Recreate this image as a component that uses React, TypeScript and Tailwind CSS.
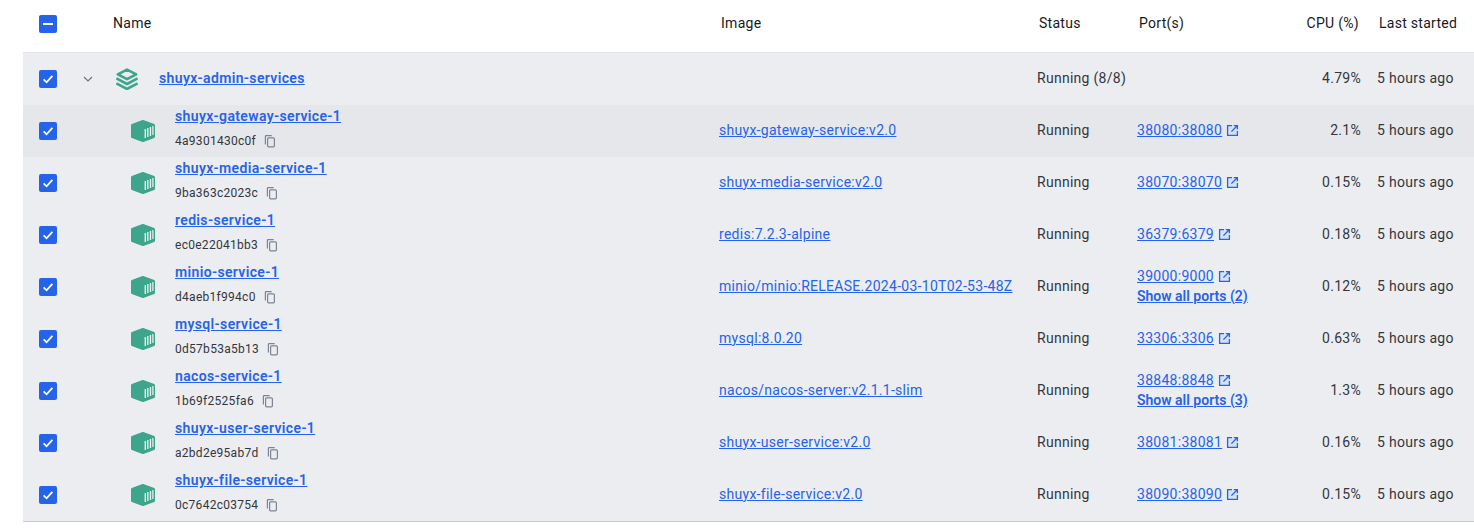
import React from "react";

const Check = () => (
  <span className="flex h-[18px] w-[18px] shrink-0 items-center justify-center rounded-[2px] bg-[#2563eb]">
    <svg width="14" height="14" viewBox="0 0 14 14" fill="none" stroke="#fff" strokeWidth="1.8">
      <path d="M2.6 7.3l3 3 5.8-6.4" />
    </svg>
  </span>
);

const Indeterminate = () => (
  <span className="mt-[2px] flex h-[18px] w-[18px] shrink-0 items-center justify-center rounded-[2px] bg-[#2563eb]">
    <span className="h-[2px] w-[10px] bg-white" />
  </span>
);

const StackIcon = () => (
  <svg width="24" height="22" viewBox="0 0 24 22" fill="none" stroke="#3da58c" strokeWidth="2.6">
    <path d="M12 1.6L21.2 6.4 12 11.2 2.8 6.4z" strokeLinejoin="round" />
    <path d="M1.4 10.4L12 16l10.6-5.6" strokeLinejoin="round" />
    <path d="M1.4 15.4L12 21l10.6-5.6" strokeLinejoin="round" />
  </svg>
);

const ContainerIcon = () => (
  <svg width="24" height="22" viewBox="0.7 0.5 24 22">
    <path
      d="M12.2.6c.3-.1.6-.1.9 0l10.8 4c.5.2.8.6.8 1.1v11.6c0 .5-.3.9-.8 1.1l-10.8 4c-.3.1-.6.1-.9 0l-10.7-4c-.5-.2-.8-.6-.8-1.1V5.7c0-.5.3-.9.8-1.1z"
      fill="#3da58c"
    />
    <path d="M14.3 9.5h1.3v9h-1.3zM16.9 8.5h1.3v9h-1.3zM19.5 7.5h1.3v9h-1.3zM22 6.5h1.2v9H22z" fill="#ffffff" fillOpacity="0.9" />
  </svg>
);

const CopyIcon = () => (
  <svg width="14" height="14" viewBox="0 0 14 14" fill="none" stroke="#7c8594" strokeWidth="1.2" className="shrink-0">
    <path d="M2.4 10.5V2.3c0-.4.3-.7.7-.7h5.6" />
    <rect x="4.6" y="3.8" width="6.8" height="9" rx="1" />
  </svg>
);

const ExternalIcon = () => (
  <svg width="13" height="13" viewBox="0 0 13 13" fill="none" stroke="#2563eb" strokeWidth="1.3" className="shrink-0">
    <rect x="1.5" y="1.5" width="10" height="10" fill="#d6e2f8" stroke="none" />
    <path d="M6 1.6H1.6v9.8h9.8V7" />
    <path d="M7.8 1.6h3.6v3.6M11.2 1.8L5.4 7.6" />
  </svg>
);

const Chevron = () => (
  <svg width="10" height="6" viewBox="0 0 10 6" fill="none" stroke="#6b7280" strokeWidth="1.2">
    <path d="M1 1l4 4 4-4" />
  </svg>
);

const link = "text-[#2563eb] underline";
const bold = "font-semibold tracking-[0.025em]";

type Row = {
  name: string;
  id: string;
  image: string;
  port: string;
  more?: string;
  cpu: string;
  tint?: boolean;
};

const rows: Row[] = [
  { name: "shuyx-gateway-service-1", id: "4a9301430c0f", image: "shuyx-gateway-service:v2.0", port: "38080:38080", cpu: "2.1%", tint: true },
  { name: "shuyx-media-service-1", id: "9ba363c2023c", image: "shuyx-media-service:v2.0", port: "38070:38070", cpu: "0.15%" },
  { name: "redis-service-1", id: "ec0e22041bb3", image: "redis:7.2.3-alpine", port: "36379:6379", cpu: "0.18%" },
  { name: "minio-service-1", id: "d4aeb1f994c0", image: "minio/minio:RELEASE.2024-03-10T02-53-48Z", port: "39000:9000", more: "Show all ports (2)", cpu: "0.12%" },
  { name: "mysql-service-1", id: "0d57b53a5b13", image: "mysql:8.0.20", port: "33306:3306", cpu: "0.63%" },
  { name: "nacos-service-1", id: "1b69f2525fa6", image: "nacos/nacos-server:v2.1.1-slim", port: "38848:8848", more: "Show all ports (3)", cpu: "1.3%" },
  { name: "shuyx-user-service-1", id: "a2bd2e95ab7d", image: "shuyx-user-service:v2.0", port: "38081:38081", cpu: "0.16%" },
  { name: "shuyx-file-service-1", id: "0c7642c03754", image: "shuyx-file-service:v2.0", port: "38090:38090", cpu: "0.15%" },
];

export default function App() {
  return (
    <div className="h-[532px] w-[1474px] overflow-hidden bg-white pl-[23px] font-['Roboto',sans-serif] text-[14px] tracking-[0.02em] text-[#33363c]">
      <div className="flex h-[53px] items-center border-b border-[#e1e2e6] pb-[6px] text-[#17191d]">
        <div className="flex w-[696px] shrink-0 items-center pl-4">
          <Indeterminate />
          <span className="ml-[56px]">Name</span>
        </div>
        <div className="w-[318px] shrink-0 pl-[2px]">Image</div>
        <div className="w-[100px] shrink-0 pl-[2px]">Status</div>
        <div className="w-[110px] shrink-0 pl-[2px]">Port(s)</div>
        <div className="w-[114px] shrink-0 pr-[2px] text-right">CPU (%)</div>
        <div className="w-[113px] shrink-0 whitespace-nowrap pl-[18px]">Last started</div>
      </div>

      <div className="flex h-[52px] items-center bg-[#ecedf1]">
        <div className="flex w-[696px] shrink-0 items-center pl-4">
          <Check />
          <span className="ml-[26px] flex w-[10px]">
            <Chevron />
          </span>
          <span className="ml-[22px] flex">
            <StackIcon />
          </span>
          <a className={`ml-[20px] mb-[2px] ${bold} ${link}`}>shuyx-admin-services</a>
        </div>
        <div className="w-[318px] shrink-0" />
        <div className="w-[210px] shrink-0 pb-[2px]">Running (8/8)</div>
        <div className="w-[114px] shrink-0 pb-[2px] text-right">4.79%</div>
        <div className="w-[113px] shrink-0 whitespace-nowrap pb-[2px] pl-4">5 hours ago</div>
      </div>

      {rows.map((r) => (
        <div key={r.name} className={`flex h-[52px] items-center ${r.tint ? "bg-[#e6e7eb]" : "bg-[#ecedf1]"}`}>
          <div className="flex w-[696px] shrink-0 items-center pl-4">
            <Check />
            <span className="ml-[74px] flex">
              <ContainerIcon />
            </span>
            <div className="ml-[20px] flex flex-col">
              <a className={`mt-[-7px] h-[22px] leading-[22px] ${bold} ${link}`}>{r.name}</a>
              <div className="mt-[5px] flex h-[18px] items-center gap-[7px] text-[12px]">
                <span>{r.id}</span>
                <CopyIcon />
              </div>
            </div>
          </div>
          <div className="w-[318px] shrink-0 pb-[2px]">
            <a className={link}>{r.image}</a>
          </div>
          <div className="w-[100px] shrink-0 pb-[2px]">Running</div>
          <div className={`w-[110px] shrink-0 pb-[2px] ${r.more ? "flex flex-col" : "flex items-center"}`}>
            <div className="flex items-center gap-[4px] whitespace-nowrap">
              <a className={link}>{r.port}</a>
              <ExternalIcon />
            </div>
            {r.more && <a className={`mt-[-1px] whitespace-nowrap font-semibold tracking-normal ${link}`}>{r.more}</a>}
          </div>
          <div className="w-[114px] shrink-0 pb-[2px] text-right">{r.cpu}</div>
          <div className="w-[113px] shrink-0 whitespace-nowrap pb-[2px] pl-4">5 hours ago</div>
        </div>
      ))}
      <div className="h-px bg-[#c6c8cd]" />
    </div>
  );
}
